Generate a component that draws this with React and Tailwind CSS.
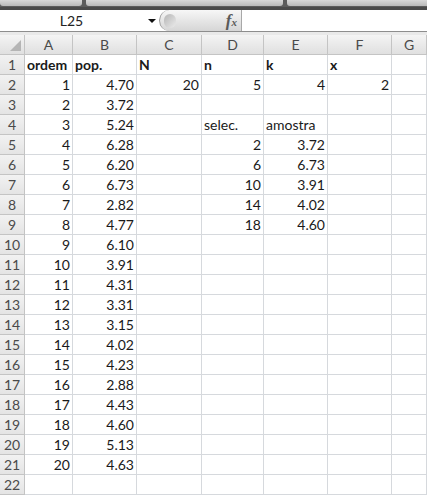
import React from 'react';

const cols = ['A', 'B', 'C', 'D', 'E', 'F', 'G'];
const widths = ['w-[48px]', 'w-[64px]', 'w-[65px]', 'w-[62px]', 'w-[64px]', 'w-[64px]', 'flex-1'];

const pop = ['4.70', '3.72', '5.24', '6.28', '6.20', '6.73', '2.82', '4.77', '6.10', '3.91', '4.31', '3.31', '3.15', '4.02', '4.23', '2.88', '4.43', '4.60', '5.13', '4.63'];

// cell content per row: {col: [text, align, bold]}
const buildRows = () => {
  const rows = [];
  for (let r = 1; r <= 22; r++) {
    const cells = {};
    if (r === 1) {
      cells.A = ['ordem', 'l', true];
      cells.B = ['pop.', 'l', true];
      cells.C = ['N', 'l', true];
      cells.D = ['n', 'l', true];
      cells.E = ['k', 'l', true];
      cells.F = ['x', 'l', true];
    } else if (r <= 21) {
      cells.A = [String(r - 1), 'r'];
      cells.B = [pop[r - 2], 'r'];
    }
    if (r === 2) {
      cells.C = ['20', 'r'];
      cells.D = ['5', 'r'];
      cells.E = ['4', 'r'];
      cells.F = ['2', 'r'];
    }
    if (r === 4) {
      cells.D = ['selec.', 'l'];
      cells.E = ['amostra', 'l'];
    }
    const sample = { 5: ['2', '3.72'], 6: ['6', '6.73'], 7: ['10', '3.91'], 8: ['14', '4.02'], 9: ['18', '4.60'] };
    if (sample[r]) {
      cells.D = [sample[r][0], 'r'];
      cells.E = [sample[r][1], 'r'];
    }
    rows.push({ r, cells });
  }
  return rows;
};

const TabStrip = () => (
  <div className="h-[7px] bg-[#5c5c5c] flex gap-[4px] shrink-0">
    <div className="w-[82px] h-[6px] bg-gradient-to-b from-[#d8d8d8] to-[#b9b9b9] rounded-b-[3px]" />
    <div className="w-[197px] h-[6px] bg-gradient-to-b from-[#d8d8d8] to-[#b9b9b9] rounded-b-[3px]" />
    <div className="flex-1 h-[6px] bg-gradient-to-b from-[#d8d8d8] to-[#b9b9b9] rounded-bl-[3px]" />
  </div>
);

const FormulaBar = () => (
  <div className="flex h-[25px] bg-white border-t-[3px] border-[#4a4a4a] border-b border-b-[#8d8d8d] shrink-0">
    <div className="w-[159px] flex items-center relative">
      <span className="w-[143px] text-center text-[14px] text-[#222]">L25</span>
      <span className="absolute left-[148px] top-[9px] w-0 h-0 border-l-[4px] border-r-[4px] border-t-[4px] border-l-transparent border-r-transparent border-t-[#111]" />
    </div>
    <div className="w-[83px] h-full rounded-l-full border-l border-[#9a9a9a] bg-gradient-to-b from-[#f7f7f7] via-[#e6e6e6] to-[#d6d6d6] border-r border-r-[#a8a8a8] flex items-center justify-between pl-[4px] pr-[4px]">
      <div className="w-[12px] h-[14px] rounded-full bg-gradient-to-br from-[#b5b5b5] to-[#ececec]" />
      <span className="text-[17px] leading-none italic text-[#5a5a5a] font-['Liberation_Serif',serif] font-bold">
        f<span className="text-[11px]">x</span>
      </span>
    </div>
    <div className="flex-1" />
  </div>
);

export default function App() {
  const rows = buildRows();
  return (
    <div className="w-[427px] h-[499px] overflow-hidden bg-white flex flex-col font-['Lato',sans-serif]">
      <TabStrip />
      <FormulaBar />
      <div className="h-[3px] bg-[#e9e9e9] shrink-0" />

      {/* column headers */}
      <div className="flex h-[20px] shrink-0">
        <div className="w-[25px] h-full border-r border-b border-[#c4c4c4] bg-gradient-to-b from-[#f4f4f4] to-[#e0e0e0] relative">
          <span className="absolute right-[3px] bottom-[3px] w-0 h-0 border-b-[11px] border-l-[11px] border-b-[#b5b5b5] border-l-transparent" />
        </div>
        {cols.map((c, i) => (
          <div
            key={c}
            className={`${widths[i]} h-full border-r border-b border-[#c4c4c4] bg-gradient-to-b from-[#f4f4f4] to-[#e0e0e0] flex items-center justify-center text-[14px] text-[#4a4a4a] leading-none`}
          >
            {c}
          </div>
        ))}
      </div>

      {/* rows */}
      {rows.map(({ r, cells }) => (
        <div key={r} className="flex h-[20px] shrink-0">
          <div className="w-[25px] h-full border-r border-b border-[#c4c4c4] bg-gradient-to-b from-[#f2f2f2] to-[#e4e4e4] flex items-center justify-center text-[14px] text-[#4a4a4a] leading-none">
            {r}
          </div>
          {cols.map((c, i) => {
            const cell = cells[c];
            return (
              <div
                key={c}
                className={`${widths[i]} h-full border-r border-b border-[#d6d9dd] flex items-end pb-[1px] px-[2px] text-[14px] text-[#1a1a1a] leading-[17px] whitespace-nowrap ${cell && cell[1] === 'r' ? 'justify-end' : 'justify-start'} ${cell && cell[2] ? 'font-bold' : ''}`}
              >
                {cell ? cell[0] : ''}
              </div>
            );
          })}
        </div>
      ))}
      <div className="flex-1" />
    </div>
  );
}
